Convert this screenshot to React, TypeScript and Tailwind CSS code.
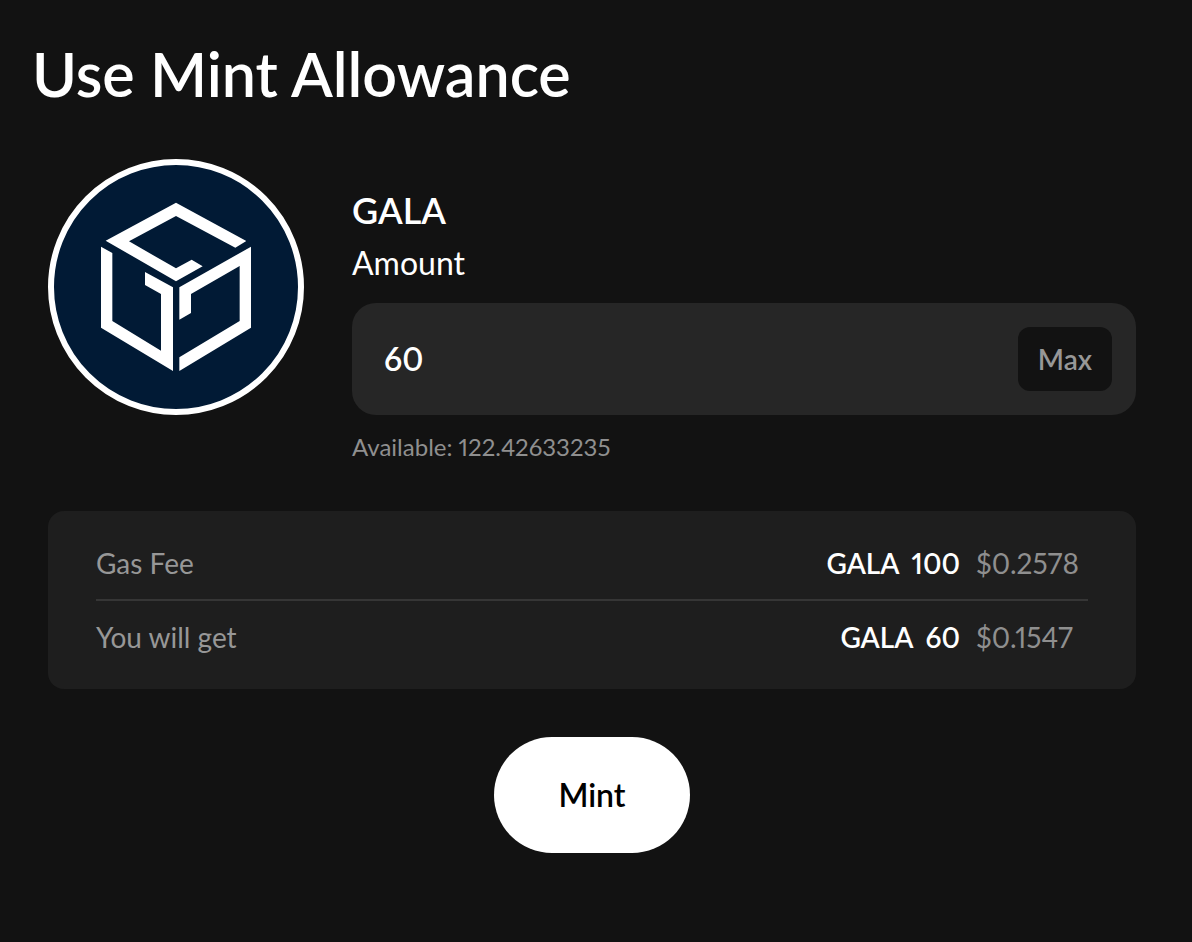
import { useState } from "react";
import type React from "react";

const AVAILABLE = "122.42633235";

const fees = [
  { label: "Gas Fee", amount: "100", price: "$0.2578" },
  { label: "You will get", amount: "60", price: "$0.1547" },
];

function GalaLogo() {
  return (
    <svg viewBox="0 0 768 768" className="size-64 shrink-0" role="img" aria-label="GALA">
      <circle cx="384" cy="384" r="375" fill="#011a35" stroke="#fff" strokeWidth="18" />
      <g transform="translate(-24 -27)" fill="#fff">
        <path d="M408 158 619 273 586 293 408 198 267 274 408 355 455 329 488 349 408 394 197 272Z" />
        <path d="M183 290 217 309V513L363 602V432L315 405V366L399 412V663L183 533Z" />
        <path d="M633 290V533L418 663V622L599 513V348L453 432V489L418 509V412Z" />
      </g>
    </svg>
  );
}

export default function App() {
  const [amount, setAmount] = useState("60");

  const handleSubmit = (e: React.FormEvent) => {
    e.preventDefault();
  };

  return (
    <main className="min-h-screen bg-[#121212] pt-9 pr-10 pb-20 pl-8 font-['Lato',sans-serif] text-white proportional-nums">
      <h1 className="text-[61px] leading-[75px] font-semibold">Use Mint Allowance</h1>

      <form onSubmit={handleSubmit} className="mt-12 px-4">
        <div className="flex items-start gap-12">
          <GalaLogo />
          <div className="min-w-0 flex-1 pt-7">
            <h2 className="text-4xl leading-[46px] font-semibold">GALA</h2>
            <label htmlFor="amount" className="mt-1.5 block text-[32px] leading-12">
              Amount
            </label>
            <div className="mt-4 flex h-28 items-center rounded-3xl bg-[#262626] pr-6 pl-8">
              <input
                id="amount"
                type="text"
                inputMode="decimal"
                value={amount}
                onChange={(e) => setAmount(e.target.value)}
                className="min-w-0 flex-1 bg-transparent text-[32px] font-semibold outline-none"
              />
              <button
                type="button"
                onClick={() => setAmount(AVAILABLE)}
                className="h-16 rounded-xl bg-[#121212] px-5 text-[28px] font-semibold text-[#979797]"
              >
                Max
              </button>
            </div>
            <p className="mt-4 text-2xl text-[#8f8f8f]">Available: {AVAILABLE}</p>
          </div>
        </div>

        <div className="mt-12 rounded-2xl bg-[#1e1e1e] px-12 py-4">
          <table className="w-full text-[28px]">
            <tbody className="divide-y-2 divide-[#363636]">
              {fees.map((fee) => (
                <tr key={fee.label} className="h-[73px]">
                  <th scope="row" className="text-left font-normal text-[#979797]">
                    {fee.label}
                  </th>
                  <td className="text-right font-semibold">
                    GALA <span className="ml-1.5">{fee.amount}</span>
                  </td>
                  <td className="w-32 pl-4 text-[#8f8f8f]">{fee.price}</td>
                </tr>
              ))}
            </tbody>
          </table>
        </div>

        <div className="mt-12 flex justify-center">
          <button type="submit" className="rounded-full bg-white px-16 py-8 text-[32px] leading-[52px] font-semibold text-black">
            Mint
          </button>
        </div>
      </form>
    </main>
  );
}
